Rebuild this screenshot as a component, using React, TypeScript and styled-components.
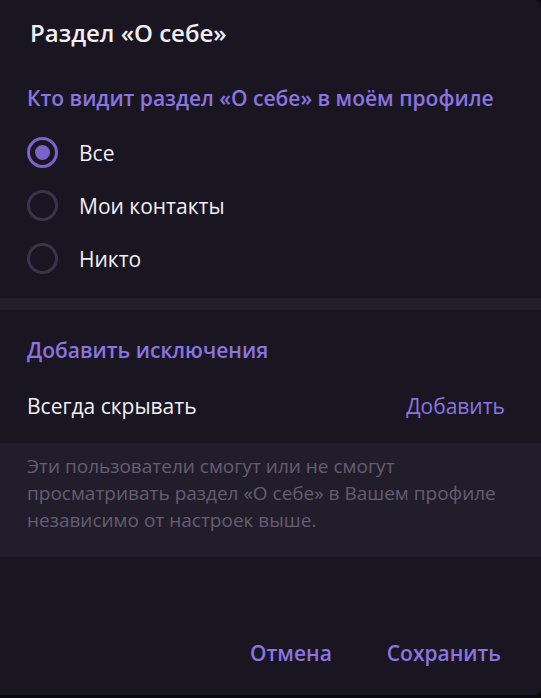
import React, { useState } from "react";
import styled, { createGlobalStyle } from "styled-components";

const Global = createGlobalStyle`
  html, body { margin: 0; padding: 0; background: #0b0a0e; }
  body { font-family: "Open Sans", "Noto Sans", sans-serif; -webkit-font-smoothing: antialiased; }
  * { box-sizing: border-box; }
`;

const accent = "#8a74e0";

const Dialog = styled.div`
  width: 541px;
  height: 695px;
  background: #1a1621;
  border-radius: 0 7px 7px 0;
  display: flex;
  flex-direction: column;
  overflow: hidden;
`;

const Title = styled.div`
  padding: 19px 0 0 30px;
  height: 67px;
  font-size: 24px;
  font-weight: 600;
  color: #f2f0f6;
  line-height: 28px;
`;

const SectionHeader = styled.div<{ $top: number }>`
  padding: ${(p) => p.$top}px 27px 0 27px;
  font-size: 21px;
  font-weight: 600;
  color: ${accent};
  line-height: 28px;
`;

const RadioList = styled.div`
  display: flex;
  flex-direction: column;
  padding: 14px 0 13px 0;
`;

const RadioRow = styled.label`
  display: flex;
  align-items: center;
  height: 53px;
  padding-left: 27px;
  gap: 21px;
  cursor: pointer;
`;

const RadioCircle = styled.span<{ $on: boolean }>`
  width: 31px;
  height: 31px;
  border-radius: 50%;
  border: 3px solid ${(p) => (p.$on ? "#7b63c7" : "#3b3449")};
  display: flex;
  align-items: center;
  justify-content: center;
  flex-shrink: 0;
  &::after {
    content: "";
    width: 15px;
    height: 15px;
    border-radius: 50%;
    background: #7b63c7;
    display: ${(p) => (p.$on ? "block" : "none")};
  }
`;

const RadioLabel = styled.span`
  font-size: 21px;
  color: #f2f0f6;
  line-height: 28px;
`;

const Divider = styled.div`
  height: 12px;
  background: #231e2c;
`;

const ExceptionRow = styled.div`
  display: flex;
  align-items: center;
  justify-content: space-between;
  padding: 0 36px 0 27px;
  height: 56px;
  margin-top: 14px;
`;

const RowText = styled.span`
  font-size: 21px;
  color: #f2f0f6;
`;

const LinkText = styled.span`
  font-size: 21px;
  color: ${accent};
  cursor: pointer;
`;

const InfoBox = styled.div`
  background: #221d2a;
  padding: 10px 27px 23px 27px;
  font-size: 19px;
  line-height: 27px;
  color: #645d72;
  margin-top: 9px;
`;

const Footer = styled.div`
  margin-top: auto;
  display: flex;
  justify-content: flex-end;
  gap: 55px;
  padding: 0 40px 28px 0;
`;

const FooterButton = styled.button`
  background: none;
  border: none;
  padding: 0;
  font-family: inherit;
  font-size: 21px;
  line-height: 28px;
  font-weight: 600;
  color: ${accent};
  cursor: pointer;
`;

const options = ["Все", "Мои контакты", "Никто"];

export default function App() {
  const [sel, setSel] = useState(0);
  return (
    <>
      <Global />
      <Dialog>
        <Title>Раздел «О себе»</Title>
        <SectionHeader $top={17}>Кто видит раздел «О себе» в моём профиле</SectionHeader>
        <RadioList>
          {options.map((o, i) => (
            <RadioRow key={o} onClick={() => setSel(i)}>
              <RadioCircle $on={sel === i} />
              <RadioLabel>{o}</RadioLabel>
            </RadioRow>
          ))}
        </RadioList>
        <Divider />
        <SectionHeader $top={26}>Добавить исключения</SectionHeader>
        <ExceptionRow>
          <RowText>Всегда скрывать</RowText>
          <LinkText>Добавить</LinkText>
        </ExceptionRow>
        <InfoBox>
          Эти пользователи смогут или не смогут
          <br />
          просматривать раздел «О себе» в Вашем профиле
          <br />
          независимо от настроек выше.
        </InfoBox>
        <Footer>
          <FooterButton>Отмена</FooterButton>
          <FooterButton>Сохранить</FooterButton>
        </Footer>
      </Dialog>
    </>
  );
}
